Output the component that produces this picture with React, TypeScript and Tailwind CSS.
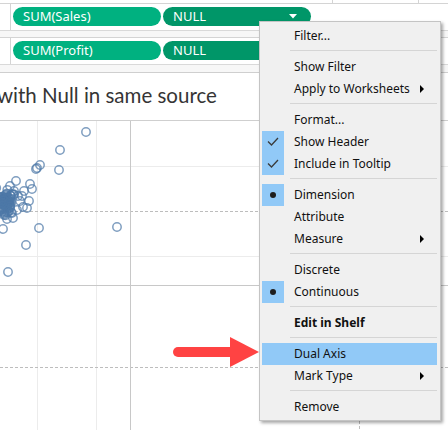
import React from 'react';

type Item =
  | { sep: true }
  | { t: string; check?: boolean; dot?: boolean; sub?: boolean; bold?: boolean; hl?: boolean };

const items: Item[] = [
  { t: 'Filter...' },
  { sep: true },
  { t: 'Show Filter' },
  { t: 'Apply to Worksheets', sub: true },
  { sep: true },
  { t: 'Format...' },
  { t: 'Show Header', check: true },
  { t: 'Include in Tooltip', check: true },
  { sep: true },
  { t: 'Dimension', dot: true },
  { t: 'Attribute' },
  { t: 'Measure', sub: true },
  { sep: true },
  { t: 'Discrete' },
  { t: 'Continuous', dot: true },
  { sep: true },
  { t: 'Edit in Shelf', bold: true },
  { sep: true },
  { t: 'Dual Axis', hl: true },
  { t: 'Mark Type', sub: true },
  { sep: true },
  { t: 'Remove' },
];

const fixedPts: [number, number][] = [
  [86, 131], [60, 149], [37, 167], [40, 164], [36, 168], [59, 169], [16, 180],
  [30, 183], [32, 188], [29, 200], [23, 206], [27, 207], [13, 217], [7, 218],
  [3, 228], [39, 227], [117, 226], [26, 244], [8, 271], [14, 190], [18, 195],
  [20, 200], [10, 185], [22, 195], [17, 209], [12, 212], [4, 214], [24, 190],
];

let seed = 11;
const rnd = () => {
  seed = (seed * 16807) % 2147483647;
  return seed / 2147483647;
};
const clusterPts: [number, number][] = [];
for (let i = 0; i < 90; i++) {
  const g1 = (rnd() + rnd() + rnd() - 1.5) / 1.5;
  const g2 = (rnd() + rnd() + rnd() - 1.5) / 1.5;
  clusterPts.push([5 + g1 * 11, 201 + g2 * 16]);
}
const pts = [...fixedPts, ...clusterPts];

function Pill({ label, dark, caret }: { label: string; dark?: boolean; caret?: boolean }) {
  return (
    <div
      className={`relative flex h-[19px] w-[148px] items-center rounded-full pl-[10px] text-[13px] leading-none text-white ${
        dark ? 'bg-[#009668]' : 'bg-[#00b180]'
      }`}
    >
      {label}
      {caret && (
        <svg className="absolute right-[14px] top-[7px]" width="8" height="5" viewBox="0 0 8 5">
          <polygon points="0,0 8,0 4,4.5" fill="#ffffff" />
        </svg>
      )}
    </div>
  );
}

function ShelfRow({ children }: { children: React.ReactNode }) {
  return (
    <div className="flex h-[27px] border-t border-[#d4d4d4]">
      <div className="relative w-[11px] border-r border-[#d4d4d4]" />
      <div className="flex items-start gap-[2px] pl-[2px] pt-[3px]">{children}</div>
    </div>
  );
}

export default function App() {
  return (
    <div className="relative h-[430px] w-[448px] overflow-hidden bg-white font-['Noto_Sans',sans-serif]">
      <div className="relative h-[3px]">
        <div className="absolute left-[332px] top-0 h-[3px] w-px bg-[#d4d4d4]" />
        <div className="absolute left-[418px] top-0 h-[3px] w-px bg-[#d4d4d4]" />
      </div>
      <ShelfRow>
        <Pill label="SUM(Sales)" />
        <Pill label="NULL" dark caret />
      </ShelfRow>
      <div className="h-[7px] border-t border-[#d9d9d9] bg-[#f7f7f7]" />
      <ShelfRow>
        <Pill label="SUM(Profit)" />
        <Pill label="NULL" dark />
      </ShelfRow>
      <div className="h-[8px] border-t border-[#d9d9d9] bg-[#f7f7f7]" />
      <div className="flex h-[49px] items-center overflow-hidden border-y border-[#cfcfcf] pb-[2px]">
        <span className="ml-[-3px] whitespace-nowrap font-['Lato',sans-serif] text-[20.5px] leading-none text-[#353535]">
          with Null in same source
        </span>
      </div>
      <svg width="448" height="310" className="block">
        <line x1="37.5" y1="0" x2="37.5" y2="310" stroke="#ececec" />
        <line x1="96.5" y1="0" x2="96.5" y2="310" stroke="#ececec" />
        <line x1="0" y1="45.5" x2="448" y2="45.5" stroke="#ececec" />
        <line x1="0" y1="135.5" x2="448" y2="135.5" stroke="#ececec" />
        <line x1="0" y1="90.5" x2="448" y2="90.5" stroke="#bdbdbd" strokeDasharray="3 2" />
        <line x1="0" y1="246.5" x2="448" y2="246.5" stroke="#bdbdbd" strokeDasharray="3 2" />
        <line x1="359.5" y1="0" x2="359.5" y2="310" stroke="#bdbdbd" strokeDasharray="3 2" />
        <line x1="130.5" y1="0" x2="130.5" y2="310" stroke="#c8c8c8" />
        <line x1="0" y1="164.5" x2="448" y2="164.5" stroke="#c8c8c8" />
        {pts.map(([x, y], i) => (
          <circle key={i} cx={x} cy={y - 120} r="4.2" fill="none" stroke="#4e79a7" strokeWidth="1.5" strokeOpacity="0.72" />
        ))}
      </svg>

      {/* context menu */}
      <div className="absolute left-[259px] top-[21px] w-[182px] border border-[#c4c4c4] bg-[#f0f0f0] pb-[2px] pt-[3px] text-[12px] text-[#111] shadow-[2px_2px_3px_rgba(0,0,0,0.35)]">
        {items.map((it, i) =>
          'sep' in it ? (
            <div key={i} className="ml-[30px] mr-[3px] h-[9px] pt-[3px]">
              <div className="h-px bg-[#d5d5d5]" />
            </div>
          ) : (
            <div
              key={i}
              className={`relative ml-[2px] mr-[3px] flex h-[22px] items-center ${it.hl ? 'bg-[#91c9f7]' : ''} ${
                it.bold ? 'font-bold' : ''
              }`}
            >
              <div
                className={`flex h-[22px] w-[22px] items-center justify-center ${
                  it.check || it.dot ? 'bg-[#91c9f7]' : ''
                }`}
              >
                {it.check && (
                  <svg width="22" height="22" viewBox="0 0 22 22">
                    <polyline points="6,10.5 9.5,14 16,7" fill="none" stroke="#3a3a3a" strokeWidth="1.3" />
                  </svg>
                )}
                {it.dot && <div className="h-[6px] w-[6px] rounded-full bg-[#1e1e1e]" />}
              </div>
              <span className="pl-[10px] leading-none">{it.t}</span>
              {it.sub && (
                <svg className="absolute right-[13px] top-[7px]" width="4" height="8" viewBox="0 0 4 8">
                  <polygon points="0,0 4,4 0,8" fill="#000" />
                </svg>
              )}
            </div>
          )
        )}
      </div>

      {/* red arrow */}
      <svg className="absolute left-[170px] top-[335px]" width="92" height="34" viewBox="0 0 92 34">
        <rect x="3" y="12" width="62" height="10" rx="5" fill="#ff4343" />
        <polygon points="60,2 89,17 60,32" fill="#ff4343" />
      </svg>
    </div>
  );
}
